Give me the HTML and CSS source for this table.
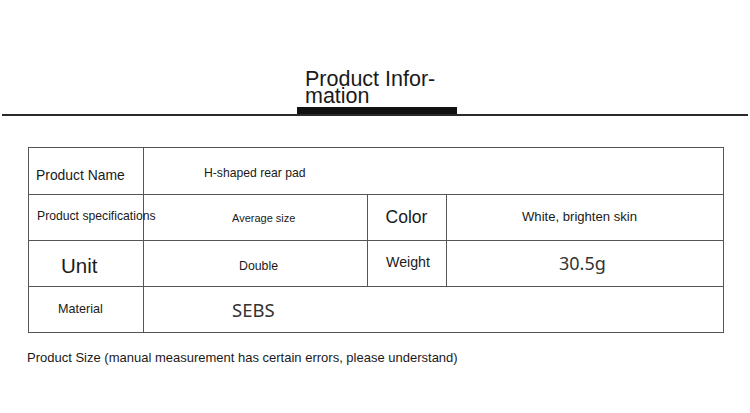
FILE: index.html
```html
<!DOCTYPE html>
<html>
<head>
<meta charset="utf-8">
<link rel="stylesheet" href="styles.css">
</head>
<body>
<header class="head">
  <h1 class="title">Product Infor-mation</h1>
  <div class="bar"></div>
  <div class="rule"></div>
</header>
<section class="spec">
  <div class="cell c1 pname">Product Name</div>
  <div class="cell span3 pval">H-shaped rear pad</div>

  <div class="cell c1 pspec">Product specifications</div>
  <div class="cell avg">Average size</div>
  <div class="cell mid color">Color</div>
  <div class="cell white">White, brighten skin</div>

  <div class="cell c1 unit">Unit</div>
  <div class="cell dbl">Double</div>
  <div class="cell mid weight">Weight</div>
  <div class="cell wval">30.5g</div>

  <div class="cell c1 mat">Material</div>
  <div class="cell span3 sebs">SEBS</div>
</section>
<p class="note">Product Size (manual measurement has certain errors, please understand)</p>
</body>
</html>
```

FILE: styles.css
```css
* { box-sizing: border-box; }
html, body { margin: 0; padding: 0; background: #fff; }
body {
  font-family: "Liberation Sans", Arial, sans-serif;
  color: #1a1a1a;
  width: 750px;
  height: 413px;
  overflow: hidden;
}
.head {
  padding-top: 71px;
}
.title {
  margin: 0 0 0 305px;
  width: 140px;
  font-size: 21.5px;
  line-height: 17px;
  font-weight: normal;
  color: #1a1a1a;
}
.bar {
  margin: 2px 0 0 297px;
  width: 160px;
  height: 8px;
  background: #111;
}
.rule {
  margin: -1px 2px 0 2px;
  height: 2px;
  background: #2a2a2a;
}
.spec {
  margin: 31px 0 0 28px;
  width: 696px;
  display: grid;
  grid-template-columns: 115px 224px 79px 277px;
  grid-template-rows: 47px 46px 46px 46px;
  border-right: 1px solid #555;
  border-bottom: 1px solid #555;
}
.cell {
  border-left: 1px solid #555;
  border-top: 1px solid #555;
  display: flex;
  align-items: center;
  white-space: nowrap;
  font-size: 12px;
  color: #1a1a1a;
}
.span3 { grid-column: span 3; }
.mid { justify-content: center; }

.pname { font-size: 13.9px; padding: 7px 0 0 7px; }
.pval { font-size: 12.2px; padding: 4px 0 0 60px; }

.pspec { font-size: 12.2px; padding: 0 0 4px 8px; overflow: visible; position: relative; z-index: 1; }
.avg { font-size: 11px; padding: 1px 0 0 88px; }
.color { font-size: 17.5px; padding-right: 1px; }
.white { font-size: 13.1px; padding: 0 0 2px 75px; }

.unit { font-size: 20.5px; padding: 5px 0 0 32px; }
.dbl { font-size: 12.3px; padding: 4px 0 0 95px; }
.weight { font-size: 14.2px; padding: 0 0 3px 2px; }
.wval { font-family: "Noto Sans", "Open Sans", sans-serif; font-size: 18px; padding: 0 0 2px 112px; color: #333; }

.mat { font-size: 12.6px; padding: 0 0 2px 29px; }
.sebs { font-family: "Noto Sans", "Open Sans", sans-serif; font-size: 18.5px; padding: 0 0 0 88px; color: #333; }

.note {
  margin: 17px 0 0 27px;
  font-size: 13px;
  line-height: 15px;
  color: #1a1a1a;
}
```
